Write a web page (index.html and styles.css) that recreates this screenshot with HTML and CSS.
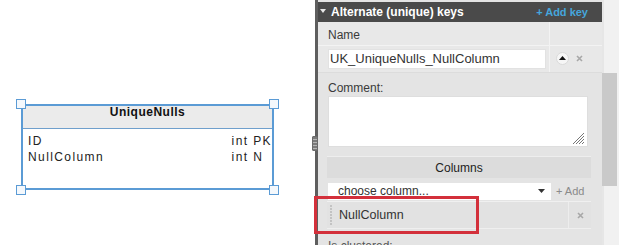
FILE: index.html
```html
<!DOCTYPE html>
<html>
<head>
<meta charset="utf-8">
<link rel="stylesheet" href="styles.css">
</head>
<body>
<div class="app">
  <div class="canvas">
    <div class="entity">
      <div class="entity-title">UniqueNulls</div>
      <div class="entity-body">
        <span class="ecol">ID</span><span class="etype">int PK</span>
        <span class="ecol">NullColumn</span><span class="etype">int N</span>
      </div>
      <span class="handle h-tl"></span>
      <span class="handle h-tr"></span>
      <span class="handle h-bl"></span>
      <span class="handle h-br"></span>
    </div>
  </div>
  <div class="splitter"><span class="grip"></span></div>
  <div class="panel">
    <div class="panel-main">
      <div class="phead">
        <span class="caret"></span>
        <span class="ptitle">Alternate (unique) keys</span>
        <span class="addkey">+ Add key</span>
      </div>
      <div class="name-sec">
        <div class="cell c1 r1 label">Name</div>
        <div class="cell c2 r1"></div>
        <div class="cell c1 r2"><div class="input">UK_UniqueNulls_NullColumn</div></div>
        <div class="cell c2 r2 btns">
          <span class="upbtn"><svg width="7" height="4" viewBox="0 0 7 4"><path d="M0 4 L3.5 0 L7 4 Z" fill="#111"/></svg></span>
          <svg class="xicon" width="7" height="7" viewBox="0 0 7 7"><path d="M1 1 L6 6 M6 1 L1 6" stroke="#a8a8a8" stroke-width="1.6"/></svg>
        </div>
      </div>
      <div class="comment-sec">
        <div class="label clabel">Comment:</div>
        <div class="textarea">
          <svg width="12" height="12" viewBox="0 0 12 12"><path d="M11 3 L3 11 M11 6 L6 11 M11 9 L9 11 M11 0 L0 11" stroke="#777" stroke-width="1"/></svg>
        </div>
      </div>
      <div class="columns">
        <div class="col-head">Columns</div>
        <div class="col-add">
          <div class="select"><span>choose column...</span><svg width="7" height="4" viewBox="0 0 7 4"><path d="M0 0 L7 0 L3.5 4 Z" fill="#333"/></svg></div>
          <span class="addbtn">+ Add</span>
        </div>
        <div class="col-row">
          <span class="dots"></span>
          <span class="colname">NullColumn</span>
          <span class="col-x"><svg width="7" height="7" viewBox="0 0 7 7"><path d="M1 1 L6 6 M6 1 L1 6" stroke="#a8a8a8" stroke-width="1.6"/></svg></span>
        </div>
      </div>
      <div class="label clustered">Is clustered:</div>
    </div>
    <div class="scroll"><div class="thumb"></div></div>
  </div>
  <div class="highlight"></div>
</div>
</body>
</html>
```
FILE: styles.css
```css
* { box-sizing: border-box; }
html, body { margin: 0; padding: 0; }
body {
  width: 619px;
  height: 245px;
  overflow: hidden;
  background: #ffffff;
  font-family: "Liberation Sans", Arial, sans-serif;
  font-size: 12px;
  color: #333;
}
.app {
  position: relative;
  display: flex;
  width: 619px;
  height: 245px;
}
.canvas {
  position: relative;
  width: 312px;
  height: 245px;
  background: #fff;
}
.entity {
  position: absolute;
  left: 21px;
  top: 104px;
  width: 253px;
  height: 86px;
  border: 2px solid #5b9bd5;
  background: #fff;
}
.entity-title {
  height: 23px;
  line-height: 13px;
  background: #ebebeb;
  border-bottom: 1px solid #6f9fcc;
  text-align: center;
  font-weight: bold;
  font-size: 12px;
  letter-spacing: 0.5px;
  color: #111;
}
.entity-body {
  display: grid;
  grid-template-columns: 1fr auto;
  padding: 4px 0 0 5px;
  font-size: 12px;
  line-height: 16px;
  letter-spacing: 1.4px;
  white-space: nowrap;
  color: #222;
}
.handle {
  position: absolute;
  width: 10px;
  height: 10px;
  background: #f4f8fc;
  border: 1px solid #5b9bd5;
}
.h-tl { left: -7px; top: -7px; }
.h-tr { right: -7px; top: -7px; }
.h-bl { left: -7px; bottom: -7px; }
.h-br { right: -7px; bottom: -7px; }

.splitter {
  width: 6px;
  height: 245px;
  padding-top: 136px;
  background: linear-gradient(to right, #fff 0, #fff 3px, #5e5e5e 3px, #5e5e5e 6px);
}
.grip {
  display: block;
  width: 6px;
  height: 15px;
  border-radius: 1px;
  background: repeating-linear-gradient(to bottom, #7a7a7a 0, #7a7a7a 2px, #b5b5b5 2px, #b5b5b5 3px);
  border: 1px solid #6a6a6a;
}
.panel {
  display: flex;
  width: 301px;
  height: 245px;
}
.panel-main {
  width: 284px;
  height: 245px;
  background: #e4e4e4;
  padding-top: 2px;
}
.phead {
  display: flex;
  align-items: center;
  height: 20px;
  background: #4a4a4a;
  padding: 0 14px 0 2px;
}
.caret {
  width: 0;
  height: 0;
  border-left: 3px solid transparent;
  border-right: 3px solid transparent;
  border-top: 4px solid #e8e8e8;
  margin-right: 5px;
  margin-top: -2px;
}
.ptitle {
  flex: 1;
  color: #fff;
  font-weight: bold;
  font-size: 12px;
}
.addkey {
  color: #45a6dc;
  font-weight: bold;
  font-size: 11px;
}
.name-sec {
  display: grid;
  grid-template-columns: 232px 1fr;
  grid-template-rows: 24px 26px;
  background: #e8e8e8;
}
.cell.r1 { border-bottom: 1px solid #f3f3f3; }
.cell.c1 { border-right: 1px solid #f3f3f3; }
.label {
  color: #3a3a3a;
  font-size: 12px;
}
.cell.r1.label {
  padding: 4px 0 0 10px;
  line-height: 19px;
}
.cell.c1.r2 { padding: 3px 0 0 10px; }
.input {
  width: 218px;
  height: 20px;
  background: #fff;
  border: 1px solid #e2e2e2;
  padding-left: 1px;
  font-size: 13px;
  line-height: 18px;
  color: #333;
}
.btns {
  display: flex;
  align-items: center;
  padding-left: 6px;
  padding-bottom: 1px;
}
.upbtn {
  display: flex;
  align-items: center;
  justify-content: center;
  width: 13px;
  height: 13px;
  border-radius: 50%;
  background: #f6f6f6;
  border: 1px solid #dadada;
  margin-right: 7px;
  padding-bottom: 1px;
}
.comment-sec {
  padding: 8px 14px 0 10px;
  border-top: 1px solid #dcdcdc;
}
.clabel {
  line-height: 14px;
  margin-bottom: 1px;
}
.textarea {
  display: flex;
  justify-content: flex-end;
  align-items: flex-end;
  height: 51px;
  background: #fff;
  border: 1px solid #dedede;
  padding: 0 2px 1px 0;
}
.columns {
  margin: 9px 11px 0 9px;
  background: #e0e0e0;
}
.col-head {
  height: 22px;
  line-height: 22px;
  text-align: center;
  background: #dcdcdc;
  border-top: 1px solid #eeeeee;
  color: #222;
  font-size: 12px;
}
.col-add {
  display: flex;
  align-items: center;
  height: 24px;
  padding: 3px 0 0 1px;
  background: #e4e4e4;
  border-bottom: 1px solid #f0f0f0;
}
.select {
  display: flex;
  align-items: center;
  justify-content: space-between;
  width: 223px;
  height: 17px;
  background: #fff;
  padding: 0 6px 0 10px;
  color: #333;
  font-size: 12px;
}
.addbtn {
  margin-left: 5px;
  color: #8a8a8a;
  font-size: 11px;
}
.col-row {
  display: flex;
  align-items: center;
  height: 27px;
  background: #e2e2e2;
  border-bottom: 1px solid #efefef;
}
.dots {
  width: 3px;
  height: 20px;
  margin: 0 6px 0 3px;
  background-image: radial-gradient(circle at 1px 1px, #c2c2c2 0.7px, transparent 0.9px);
  background-size: 3px 3px;
}
.colname {
  flex: 1;
  font-size: 12.5px;
  color: #333;
}
.col-x {
  display: flex;
  align-items: center;
  justify-content: center;
  width: 23px;
  height: 26px;
  border-left: 1px solid #ededed;
}
.clustered {
  padding: 10px 0 0 10px;
  line-height: 14px;
  color: #555;
}
.scroll {
  width: 17px;
  height: 245px;
  background: linear-gradient(to right, #e6e6e6 0, #e6e6e6 2px, #f1f1f1 2px);
  padding-top: 73px;
}
.thumb {
  width: 15px;
  height: 113px;
  background: #c9c9c9;
}
.highlight {
  position: absolute;
  left: 314px;
  top: 196px;
  width: 165px;
  height: 38px;
  border: 3px solid #d3303b;
}
```
